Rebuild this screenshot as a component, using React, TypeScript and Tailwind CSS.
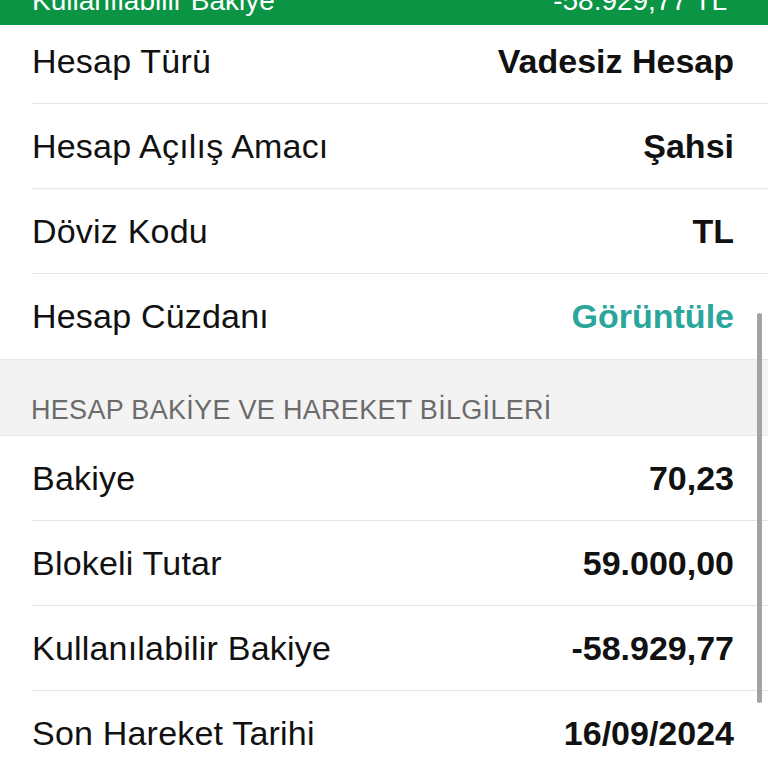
import { ReactNode } from "react";

interface Row {
    label: string;
    value: ReactNode;
}

const accountRows: Row[] = [
    { label: "Hesap Açılış Amacı", value: "Şahsi" },
    { label: "Döviz Kodu", value: "TL" },
    {
        label: "Hesap Cüzdanı",
        value: <span className="text-[#2aa69b]">Görüntüle</span>,
    },
];

const balanceRows: Row[] = [
    { label: "Bakiye", value: "70,23" },
    { label: "Blokeli Tutar", value: "59.000,00" },
    { label: "Kullanılabilir Bakiye", value: "-58.929,77" },
    { label: "Son Hareket Tarihi", value: "16/09/2024" },
];

function InfoRow({ label, value, last }: Row & { last?: boolean }) {
    return (
        <div
            className={
                "ml-[32px] h-[85px] flex items-center justify-between pr-[34px] " +
                (last ? "" : "border-b border-[#e6e6e6]")
            }
        >
            <span className="text-[34px] tracking-[0.2px] text-[#111]">{label}</span>
            <span className="text-[34px] font-bold text-[#111]">{value}</span>
        </div>
    );
}

export default function App() {
    return (
        <div
            className="relative w-[768px] h-[768px] overflow-hidden bg-white"
            style={{ fontFamily: '"Liberation Sans", Arial, sans-serif' }}
        >
            <div className="h-[25px] overflow-hidden bg-[#0a9444] px-[32px] pr-[41px]">
                <div className="mt-[-13px] flex justify-between leading-[28px] text-[28px] text-white">
                    <span>Kullanılabilir Bakiye</span>
                    <span>-58.929,77 TL</span>
                </div>
            </div>

            <div className="ml-[32px] h-[79px] pb-[6px] flex items-center justify-between pr-[34px] border-b border-[#e6e6e6]">
                <span className="text-[34px] tracking-[0.2px] text-[#111]">Hesap Türü</span>
                <span className="text-[34px] font-bold text-[#111]">Vadesiz Hesap</span>
            </div>
            {accountRows.map((row, i) => (
                <InfoRow key={row.label} {...row} last={i === accountRows.length - 1} />
            ))}

            <div className="h-[77px] bg-[#f3f3f3] border-y border-[#e8e8e8] flex items-end pb-[5px] pl-[31px]">
                <span className="text-[27px] text-[#6b6b6b] tracking-[0.3px]">
                    HESAP BAKİYE VE HAREKET BİLGİLERİ
                </span>
            </div>

            {balanceRows.map((row, i) => (
                <InfoRow key={row.label} {...row} last={i === balanceRows.length - 1} />
            ))}

            <div className="absolute left-[757px] top-[313px] w-[5px] h-[390px] rounded-full bg-[#a3a3a3]" />
        </div>
    );
}
